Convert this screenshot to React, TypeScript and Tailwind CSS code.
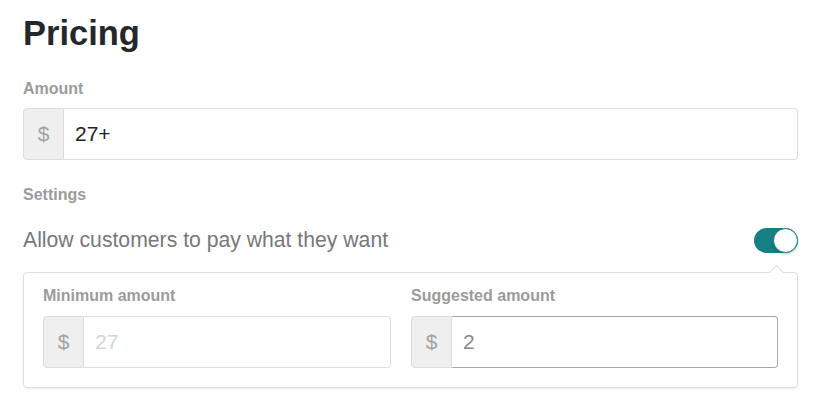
import React from "react";

function PrefixInput({ value, valueClass, inputBorder }: { value: string; valueClass: string; inputBorder?: string }) {
  return (
    <div className="flex h-[52px]">
      <div className="w-[41px] shrink-0 flex items-center justify-center bg-[#efefef] border border-[#dddddd] rounded-l-[4px] text-[21px] text-[#a3a3a3]">
        $
      </div>
      <div
        className={`flex-1 flex items-center pl-[11px] border rounded-r-[4px] border-l-0 text-[21px] ${inputBorder ?? "border-[#dddddd]"} ${valueClass}`}
      >
        {value}
      </div>
    </div>
  );
}

export default function App() {
  return (
    <div
      className="w-[825px] h-[414px] bg-white pl-[23px] pr-[27px] pt-[13px]"
      style={{ fontFamily: '"Liberation Sans", Arial, sans-serif' }}
    >
      <h1 className="text-[34.5px] leading-[40px] font-bold text-[#25282b]">Pricing</h1>
      <div className="mt-[24px] text-[16px] leading-[24px] font-bold text-[#9b9b9b]">Amount</div>
      <div className="mt-[7px]">
        <PrefixInput value="27+" valueClass="text-[#222222]" />
      </div>
      <div className="mt-[23px] text-[16px] leading-[24px] font-bold text-[#9b9b9b]">Settings</div>
      <div className="mt-[19px] h-[28px] flex items-center justify-between">
        <span className="text-[21.2px] text-[#787878]">Allow customers to pay what they want</span>
        <div className="relative w-[44px] h-[25px] rounded-full bg-[#157f83]">
          <div className="absolute right-0 top-0 w-[25px] h-[25px] rounded-full bg-white border border-[#157f83] shadow-[0_2px_3px_rgba(0,0,0,0.15)]" />
        </div>
      </div>
      <div className="relative mt-[18px] border border-[#dddddd] rounded-[4px] shadow-[0_1px_2px_rgba(0,0,0,0.08)] px-[19px] pt-[11px] pb-[19px]">
        <div className="absolute -top-[6px] right-[15px] w-[11px] h-[11px] bg-white border-l border-t border-[#dddddd] rotate-45" />
        <div className="grid grid-cols-[348px_1fr] gap-[20px]">
          <div>
            <div className="text-[16px] leading-[24px] font-bold text-[#9b9b9b]">Minimum amount</div>
            <div className="mt-[8px]">
              <PrefixInput value="27" valueClass="text-[#cfd6d7]" />
            </div>
          </div>
          <div>
            <div className="text-[16px] leading-[24px] font-bold text-[#9b9b9b]">Suggested amount</div>
            <div className="mt-[8px]">
              <PrefixInput value="2" valueClass="text-[#8a8a8a]" inputBorder="border-[#a8a8a8] border-l" />
            </div>
          </div>
        </div>
      </div>
    </div>
  );
}
